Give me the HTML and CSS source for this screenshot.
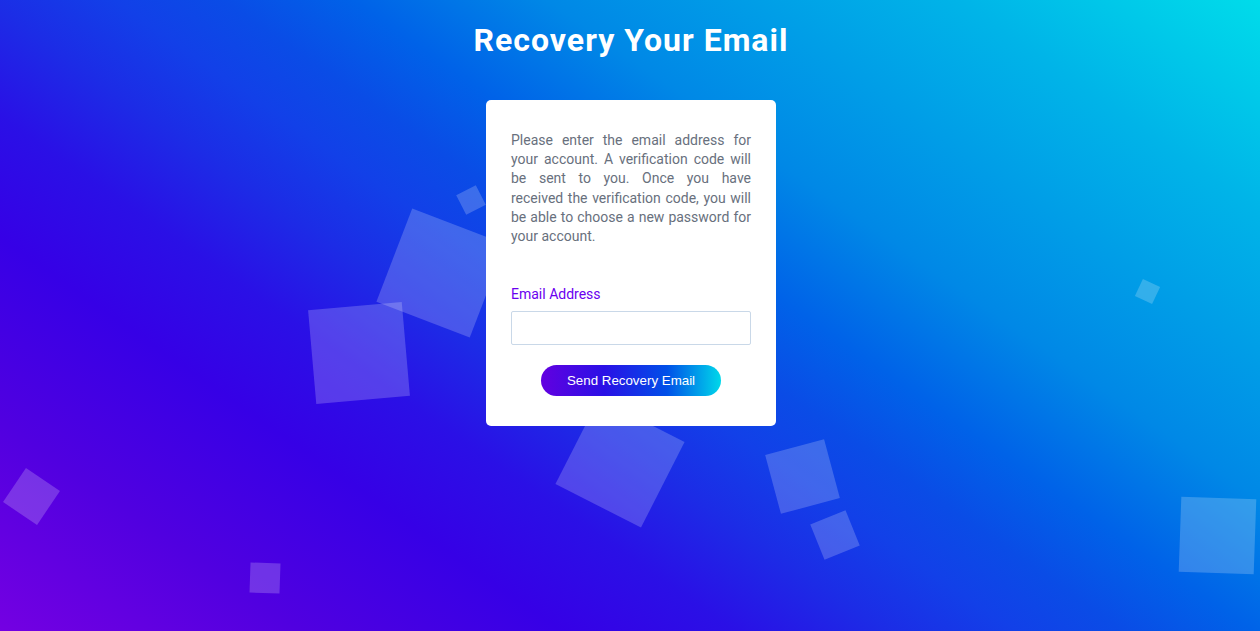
FILE: index.html
```html
<!DOCTYPE html>
<html lang="en">
<head>
<meta charset="utf-8">
<title>Recovery Your Email</title>
<link rel="stylesheet" href="styles.css">
</head>
<body>
<div class="page">
  <div class="shapes" aria-hidden="true">
    <span class="sq s1"></span>
    <span class="sq s2"></span>
    <span class="sq s3"></span>
    <span class="sq s4"></span>
    <span class="sq s5"></span>
    <span class="sq s6"></span>
    <span class="sq s7"></span>
    <span class="sq s8"></span>
    <span class="sq s9"></span>
    <span class="sq s10"></span>
  </div>
  <main class="content">
    <h1 class="title">Recovery Your Email</h1>
    <form class="card">
      <p class="intro">Please enter the email address for your account. A verification code will be sent to you. Once you have received the verification code, you will be able to choose a new password for your account.</p>
      <label class="label" for="email">Email Address</label>
      <input class="input" id="email" type="email">
      <div class="actions">
        <button class="btn" type="button">Send Recovery Email</button>
      </div>
    </form>
  </main>
</div>
</body>
</html>
```

FILE: styles.css
```css
* { box-sizing: border-box; }
html, body { margin: 0; padding: 0; }
body {
  font-family: Roboto, "Liberation Sans", Arial, sans-serif;
}
.page {
  position: relative;
  width: 100%;
  height: 631px;
  overflow: hidden;
  background: linear-gradient(35deg, #7400e2 0%, #5000e0 14%, #3600e6 26%, #2a10e6 34%, #1c2ce6 41%, #1240e8 47%, #0a4ce6 52%, #0062e8 58%, #0088e6 67%, #00b4e8 86%, #00dcea 100%);
}
.shapes { position: absolute; inset: 0; }
.sq {
  position: absolute;
  background: rgba(255, 255, 255, 0.2);
}
.s1 { left: 391px; top: 223px; width: 100px; height: 100px; transform: rotate(21deg); }
.s2 { left: 312px; top: 306px; width: 94px; height: 94px; transform: rotate(-5deg); }
.s3 { left: 460px; top: 189px; width: 22px; height: 22px; transform: rotate(-27deg); }
.s4 { left: 572px; top: 415px; width: 96px; height: 96px; transform: rotate(27deg); }
.s5 { left: 772px; top: 446px; width: 61px; height: 61px; transform: rotate(-15deg); }
.s6 { left: 816px; top: 516px; width: 38px; height: 38px; transform: rotate(-22deg); }
.s7 { left: 11px; top: 476px; width: 41px; height: 41px; transform: rotate(34deg); }
.s8 { left: 250px; top: 563px; width: 30px; height: 30px; transform: rotate(2deg); }
.s9 { left: 1138px; top: 282px; width: 19px; height: 19px; transform: rotate(25deg); }
.s10 { left: 1180px; top: 498px; width: 75px; height: 75px; transform: rotate(2deg); }

.content {
  position: relative;
  display: flex;
  flex-direction: column;
  align-items: center;
  padding-top: 20px;
}
.title {
  margin: 0 0 0 2px;
  color: #fff;
  font-family: Roboto, "Liberation Sans", sans-serif;
  font-weight: 700;
  font-size: 32px;
  line-height: 40px;
  letter-spacing: 1px;
}
.card {
  margin: 40px 0 0 2px;
  width: 290px;
  background: #fff;
  border-radius: 5px;
  padding: 31px 25px 30px;
  display: flex;
  flex-direction: column;
}
.intro {
  margin: 0;
  font-size: 14px;
  line-height: 19.2px;
  color: #68707d;
  text-align: justify;
}
.label {
  margin-top: 39px;
  font-size: 14px;
  line-height: 19px;
  color: #6a00f0;
}
.input {
  margin-top: 7px;
  height: 34px;
  width: 100%;
  border: 1px solid #c9d8e8;
  border-radius: 2px;
  background: #fff;
  outline: none;
}
.actions {
  margin-top: 20px;
  display: flex;
  justify-content: center;
}
.btn {
  width: 180px;
  height: 31px;
  border: 0;
  border-radius: 16px;
  background: linear-gradient(to right, #6200e0 0%, #2a10e6 35%, #0050e8 70%, #00d8ea 100%);
  color: #fff;
  font-family: "Liberation Sans", Arial, sans-serif;
  font-size: 13.33px;
  padding: 0;
}
```
